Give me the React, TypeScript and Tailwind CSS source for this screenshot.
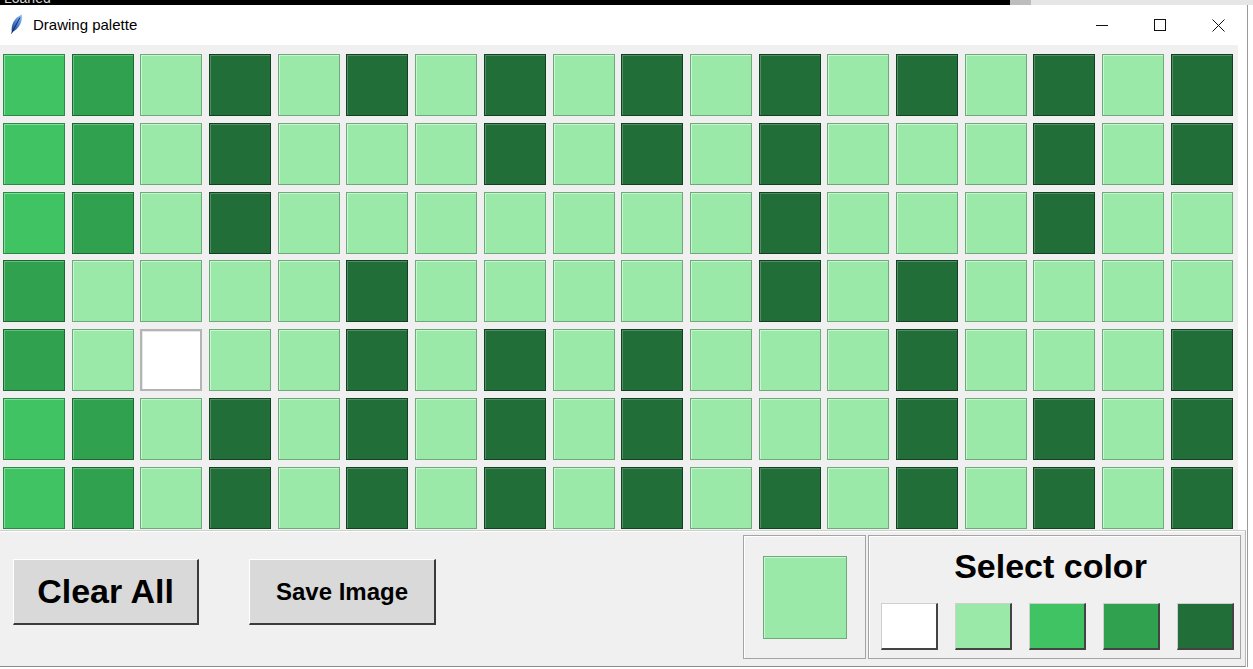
import React from "react";

type Key = "W" | "L" | "M" | "D" | "X";

// rows of the drawing, one letter per cell
const GRID = [
  "MDLXLXLXLXLXLXLXLX",
  "MDLXLLLXLXLXLLLXLX",
  "MDLXLLLLLLLXLLLXLL",
  "DLLLLXLLLLLXLXLLLL",
  "DLWLLXLXLXLLLXLLLX",
  "MDLXLXLXLXLLLXLXLX",
  "MDLXLXLXLXLXLXLXLX",
];

const CELL: Record<Key, string> = {
  W: "bg-white border-2 border-[#b4b4b4] shadow-[inset_1px_1px_0_#e6e6e6]",
  L: "bg-[#9be9a8] border border-[#6fa87b] shadow-[inset_1px_1px_0_#c9f5d1]",
  M: "bg-[#40c463] border border-[#2a8a45] shadow-[inset_1px_1px_0_#82dd9c]",
  D: "bg-[#30a14e] border border-[#1c6631] shadow-[inset_1px_1px_0_#66bd7e]",
  X: "bg-[#216e39] border border-[#133f22] shadow-[inset_1px_1px_0_#528e63]",
};

const SWATCHES: Key[] = ["W", "L", "M", "D", "X"];

const SWATCH_BG: Record<Key, string> = {
  W: "bg-white",
  L: "bg-[#9be9a8]",
  M: "bg-[#40c463]",
  D: "bg-[#30a14e]",
  X: "bg-[#216e39]",
};

function Feather() {
  return (
    <svg width="13" height="20" viewBox="0 0 13 20">
      <defs>
        <linearGradient id="fg" x1="0" y1="1" x2="1" y2="0">
          <stop offset="0" stopColor="#1a3f86" />
          <stop offset="0.55" stopColor="#4f86d8" />
          <stop offset="1" stopColor="#a8ccf4" />
        </linearGradient>
      </defs>
      <path d="M1.8 18.5 C0.8 12 3.5 4 12 0.6 C12.6 7.5 9.6 14 3.4 17.6 Z" fill="url(#fg)" />
      <path d="M1.4 19.6 L10 3.5" stroke="#0f2450" strokeWidth="0.9" />
    </svg>
  );
}

function TitleBar() {
  return (
    <div className="flex h-[40px] items-center bg-white">
      <div className="ml-[10px] mt-[-2px]">
        <Feather />
      </div>
      <span className="ml-[10px] text-[15px] text-black">Drawing palette</span>
      <div className="ml-auto flex h-full">
        <div className="flex w-[58px] items-center justify-center">
          <svg width="12" height="12" viewBox="0 0 12 12">
            <path d="M0 6.5 H12" stroke="#111" strokeWidth="1" />
          </svg>
        </div>
        <div className="flex w-[58px] items-center justify-center">
          <svg width="12" height="12" viewBox="0 0 12 12">
            <rect x="0.5" y="0.5" width="11" height="11" fill="none" stroke="#111" strokeWidth="1" />
          </svg>
        </div>
        <div className="flex w-[58px] items-center justify-center">
          <svg width="13" height="13" viewBox="0 0 13 13">
            <path d="M0.5 0.5 L12.5 12.5 M12.5 0.5 L0.5 12.5" stroke="#111" strokeWidth="1" />
          </svg>
        </div>
      </div>
    </div>
  );
}

function Canvas() {
  return (
    <div className="flex h-[485px]">
      <div className="w-[1238px] bg-[#f0f0f0] pl-[3px] pt-[9px]">
        <div className="grid grid-cols-[repeat(18,62px)] grid-rows-[repeat(7,62px)] gap-x-[6.7px] gap-y-[6.8px]">
          {GRID.map((row, r) =>
            row.split("").map((k, c) => (
              <div key={`${r}-${c}`} className={CELL[k as Key]} />
            ))
          )}
        </div>
      </div>
      <div className="flex-1 bg-white" />
    </div>
  );
}

function Controls() {
  return (
    <div className="flex h-[137px] w-[1246px] border-t border-b border-r border-t-[#cfcfcf] border-b-[#8a8a8a] border-r-[#b8b8b8] bg-[#f0f0f0] shadow-[inset_0_1px_0_#ffffff]">
      {/* buttons */}
      <div className="flex items-start gap-[50px] pl-[13px] pt-[28px]">
        <button className="flex h-[66px] w-[186px] items-center justify-center border-t border-l border-t-white border-l-white border-b-2 border-r-2 border-b-[#3a3a3a] border-r-[#3a3a3a] bg-[#d9d9d9] text-[34px] font-bold text-black">
          Clear All
        </button>
        <button className="flex h-[66px] w-[187px] items-center justify-center border-t border-l border-t-white border-l-white border-b-2 border-r-2 border-b-[#3a3a3a] border-r-[#3a3a3a] bg-[#d9d9d9] text-[24px] font-bold text-black">
          Save Image
        </button>
      </div>

      {/* current colour */}
      <div className="ml-[307px] mt-[4px] h-[124px] w-[123px] border border-[#a4a4a4] pl-[19px] pt-[20px] shadow-[inset_1px_1px_0_#ffffff]">
        <div className="h-[83px] w-[84px] border border-[#6fa87b] bg-[#9be9a8] shadow-[inset_1px_1px_0_#c9f5d1]" />
      </div>

      {/* palette */}
      <div className="ml-[2px] mt-[4px] flex h-[124px] w-[373px] flex-col items-center border border-[#a4a4a4] pt-[13px] shadow-[inset_1px_1px_0_#ffffff]">
        <div className="mr-[8px] text-[34px] leading-[34px] font-bold text-black">Select color</div>
        <div className="mt-[20px] flex gap-[17px] self-start pl-[12px]">
          {SWATCHES.map((k) => (
            <div
              key={k}
              className={`h-[47px] w-[57px] border-t border-l border-t-[#cfcfcf] border-l-[#cfcfcf] border-b-2 border-r-2 border-b-[#444444] border-r-[#444444] ${SWATCH_BG[k]}`}
            />
          ))}
        </div>
      </div>
    </div>
  );
}

export default function App() {
  return (
    <div className="h-[669px] w-[1253px] overflow-hidden bg-white font-['Liberation_Sans',Arial,sans-serif]">
      {/* strip of the window behind */}
      <div className="flex h-[5px] overflow-hidden">
        <div className="w-[1010px] bg-black">
          <span className="-mt-[12px] ml-[4px] block text-[14px] text-[#d8d8d8]">Loaned</span>
        </div>
        <div className="w-[21px] bg-[#bdbdbd]" />
        <div className="flex-1 bg-[#e6e6e6]" />
      </div>

      <div className="flex">
        <div className="w-[1248px] border-r border-[#9a9a9a]">
          <TitleBar />
          <Canvas />
          <Controls />
        </div>
        <div className="flex-1 bg-white" />
      </div>
    </div>
  );
}
